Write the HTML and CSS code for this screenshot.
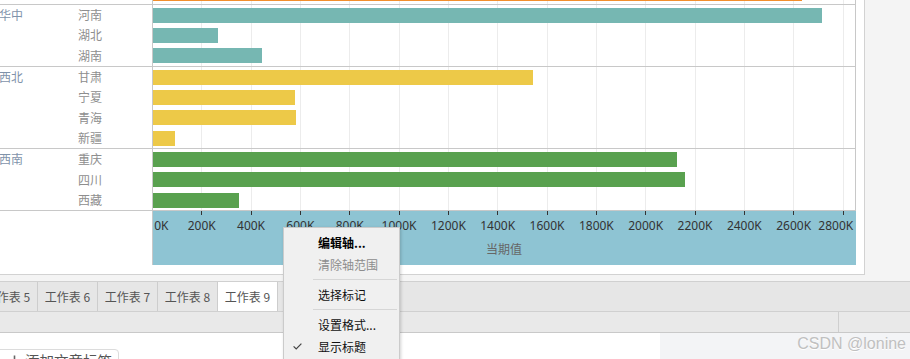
FILE: index.html
```html
<!DOCTYPE html>
<html lang="zh-CN">
<head>
<meta charset="utf-8">
<title>Chart</title>
<link rel="stylesheet" href="styles.css">
</head>
<body>
<div class="app">
  <div class="top">
    <div class="panel">
      <div class="chart">
        <div class="lead">
          <div class="labels-blank"></div>
          <div class="plot plot-lead"><div class="bar orange" style="width:649px"></div></div>
        </div>

        <div class="group">
          <div class="region">华中</div>
          <div class="provinces">
            <div class="prov">河南</div>
            <div class="prov">湖北</div>
            <div class="prov">湖南</div>
          </div>
          <div class="plot">
            <div class="row"><div class="bar teal" style="width:669px"></div></div>
            <div class="row"><div class="bar teal" style="width:65px"></div></div>
            <div class="row"><div class="bar teal" style="width:109px"></div></div>
          </div>
        </div>

        <div class="group">
          <div class="region">西北</div>
          <div class="provinces">
            <div class="prov">甘肃</div>
            <div class="prov">宁夏</div>
            <div class="prov">青海</div>
            <div class="prov">新疆</div>
          </div>
          <div class="plot">
            <div class="row"><div class="bar yellow" style="width:380px"></div></div>
            <div class="row"><div class="bar yellow" style="width:142px"></div></div>
            <div class="row"><div class="bar yellow" style="width:143px"></div></div>
            <div class="row"><div class="bar yellow" style="width:22px"></div></div>
          </div>
        </div>

        <div class="group">
          <div class="region">西南</div>
          <div class="provinces">
            <div class="prov">重庆</div>
            <div class="prov">四川</div>
            <div class="prov">西藏</div>
          </div>
          <div class="plot">
            <div class="row"><div class="bar green" style="width:524px"></div></div>
            <div class="row"><div class="bar green" style="width:532px"></div></div>
            <div class="row"><div class="bar green" style="width:86px"></div></div>
          </div>
        </div>

        <div class="axis">
          <div class="labels-blank"></div>
          <div class="axis-plot">
            <div class="ticks"></div>
            <div class="tick-labels">
              <span>0K</span><span>200K</span><span>400K</span><span>600K</span><span>800K</span>
              <span>1000K</span><span>1200K</span><span>1400K</span><span>1600K</span><span>1800K</span>
              <span>2000K</span><span>2200K</span><span>2400K</span><span>2600K</span><span>2800K</span>
            </div>
            <div class="axis-title">当期值</div>
          </div>
        </div>
      </div>
    </div>
  </div>

  <div class="tabs">
    <div class="tab">工作表 5</div>
    <div class="tab">工作表 6</div>
    <div class="tab">工作表 7</div>
    <div class="tab">工作表 8</div>
    <div class="tab active">工作表 9</div>
  </div>

  <div class="status">
    <div class="status-side"></div>
  </div>

  <div class="bottom">
    <div class="bottom-main">
      <button class="tag-btn" type="button">
        <svg width="11" height="11" viewBox="0 0 11 11"><path d="M5.5 0.5v10M0.5 5.5h10" stroke="#666" stroke-width="1.6" fill="none"/></svg>
        <span>添加文章标签</span>
      </button>
    </div>
    <div class="watermark">CSDN @lonine</div>
  </div>

  <div class="menu">
    <div class="mi bold"><span class="gutter"></span>编辑轴...</div>
    <div class="mi disabled"><span class="gutter"></span>清除轴范围</div>
    <div class="sep"></div>
    <div class="mi"><span class="gutter"></span>选择标记</div>
    <div class="sep"></div>
    <div class="mi"><span class="gutter"></span>设置格式...</div>
    <div class="mi"><span class="gutter"><svg width="9" height="7" viewBox="0 0 9 7"><polyline points="0.6,3.4 3.2,6 8.4,0.6" fill="none" stroke="#444" stroke-width="1.2"/></svg></span>显示标题</div>
  </div>
</div>
</body>
</html>
```

FILE: styles.css
```css
html, body {
  margin: 0;
  padding: 0;
}

body {
  width: 910px;
  height: 359px;
  overflow: hidden;
  background: #f4f4f4;
  font-family: "Noto Sans CJK SC", "Noto Sans", sans-serif;
}

.app {
  position: relative;
  width: 910px;
  height: 359px;
  overflow: hidden;
}

.top {
  height: 281px;
  display: flex;
  align-items: flex-start;
}

.panel {
  width: 864px;
  height: 274px;
  background: #fff;
  border-right: 1px solid #d2d2d2;
  border-bottom: 1px solid #d2d2d2;
}

.chart {
  width: 856px;
}

.lead {
  display: flex;
  height: 4px;
}

.labels-blank {
  width: 152px;
  flex: none;
}

.plot {
  box-sizing: border-box;
  width: 704px;
  flex: none;
  border-left: 1px solid #c8c8c8;
  border-right: 1px solid #c8c8c8;
  background-image: repeating-linear-gradient(90deg, transparent 0 48.2px, #ececec 48.2px 49.333px);
}

.plot-lead .bar {
  height: 1px;
}

.group {
  display: flex;
  border-top: 1px solid #c8c8c8;
}

.region {
  width: 78px;
  flex: none;
  height: 20.333px;
  line-height: 20.333px;
  font-size: 12px;
  color: #7f93aa;
  text-indent: -1px;
  white-space: nowrap;
}

.provinces {
  width: 74px;
  flex: none;
}

.prov {
  height: 20.333px;
  line-height: 20.333px;
  font-size: 12px;
  color: #8e8e8e;
}

.row {
  height: 20.333px;
  display: flex;
  align-items: center;
}

.bar {
  height: 15px;
}

.orange { background: #f28e2b; }
.teal { background: #76b7b2; }
.yellow { background: #edc948; }
.green { background: #59a14f; }

.axis {
  display: flex;
  height: 54px;
  border-top: 1px solid #c8c8c8;
}

.axis-plot {
  box-sizing: border-box;
  width: 704px;
  flex: none;
  border-left: 1px solid #c8c8c8;
  border-right: 1px solid #8ec4d3;
  background: #8ec4d3;
  overflow: hidden;
}

.ticks {
  height: 4px;
  background-image: repeating-linear-gradient(90deg, transparent 0 48.2px, #333 48.2px 49.333px);
}

.tick-labels {
  display: grid;
  grid-template-columns: repeat(15, 49.333px);
  margin-left: -25.27px;
  margin-top: 4px;
  font-family: "Noto Sans", sans-serif;
  font-size: 12px;
  line-height: 14px;
  color: #333;
  text-align: center;
  white-space: nowrap;
}

.tick-labels span:first-child {
  text-align: left;
  padding-left: 26.5px;
}

.tick-labels span:last-child {
  text-align: right;
  padding-right: 15px;
}

.axis-title {
  margin-top: 9px;
  text-align: center;
  font-size: 12px;
  line-height: 14px;
  color: #666;
}

.tabs {
  height: 29px;
  display: flex;
  background: #e6e6e6;
  border-top: 1px solid #d0d0d0;
  border-bottom: 1px solid #d0d0d0;
}

.tab {
  flex: none;
  box-sizing: border-box;
  width: 60px;
  border-right: 1px solid #cdcdcd;
  display: flex;
  align-items: center;
  justify-content: center;
  font-size: 12px;
  color: #555;
  white-space: nowrap;
}

.tab:first-child {
  margin-left: -22px;
}

.tab.active {
  background: #fff;
}

.status {
  height: 20px;
  display: flex;
  background: #e9e9e9;
  border-bottom: 1px solid #c9c9c9;
}

.status-side {
  margin-left: auto;
  box-sizing: border-box;
  width: 72px;
  border-left: 1px solid #cfcfcf;
}

.bottom {
  display: flex;
  height: 26px;
}

.bottom-main {
  width: 660px;
  flex: none;
  background: #fff;
  padding-top: 14px;
  box-sizing: border-box;
}

.tag-btn {
  display: inline-flex;
  align-items: center;
  gap: 5px;
  height: 24px;
  margin: 0 0 0 -4px;
  padding: 0 6px 0 12px;
  background: #fff;
  border: 1px solid #dcdcdc;
  border-radius: 4px;
  font-family: "Noto Sans CJK SC", sans-serif;
  font-size: 14.5px;
  line-height: 22px;
  color: #555;
}

.watermark {
  flex: 1;
  background: #f3f4f6;
  text-align: right;
  padding-right: 4px;
  font-family: "Liberation Sans", Arial, sans-serif;
  font-size: 16px;
  line-height: 22px;
  color: #c0c0c0;
  text-shadow: 0 1px 0 #fff;
}

.menu {
  position: absolute;
  left: 283px;
  top: 227px;
  width: 115px;
  height: 140px;
  padding-top: 3px;
  background: #f0f0f0;
  border: 1px solid #cbcbcb;
  box-shadow: 1px 1px 3px rgba(0, 0, 0, 0.18);
  font-size: 12px;
}

.mi {
  display: flex;
  align-items: center;
  height: 22px;
  color: #111;
  white-space: nowrap;
}

.mi.bold {
  font-weight: 700;
  color: #000;
}

.mi.disabled {
  color: #8d8d8d;
}

.gutter {
  width: 25px;
  padding-left: 9px;
  flex: none;
  display: flex;
  align-items: center;
}

.sep {
  height: 1px;
  background: #d6d6d6;
  margin: 3.5px 2px 3.5px 29px;
}
```
